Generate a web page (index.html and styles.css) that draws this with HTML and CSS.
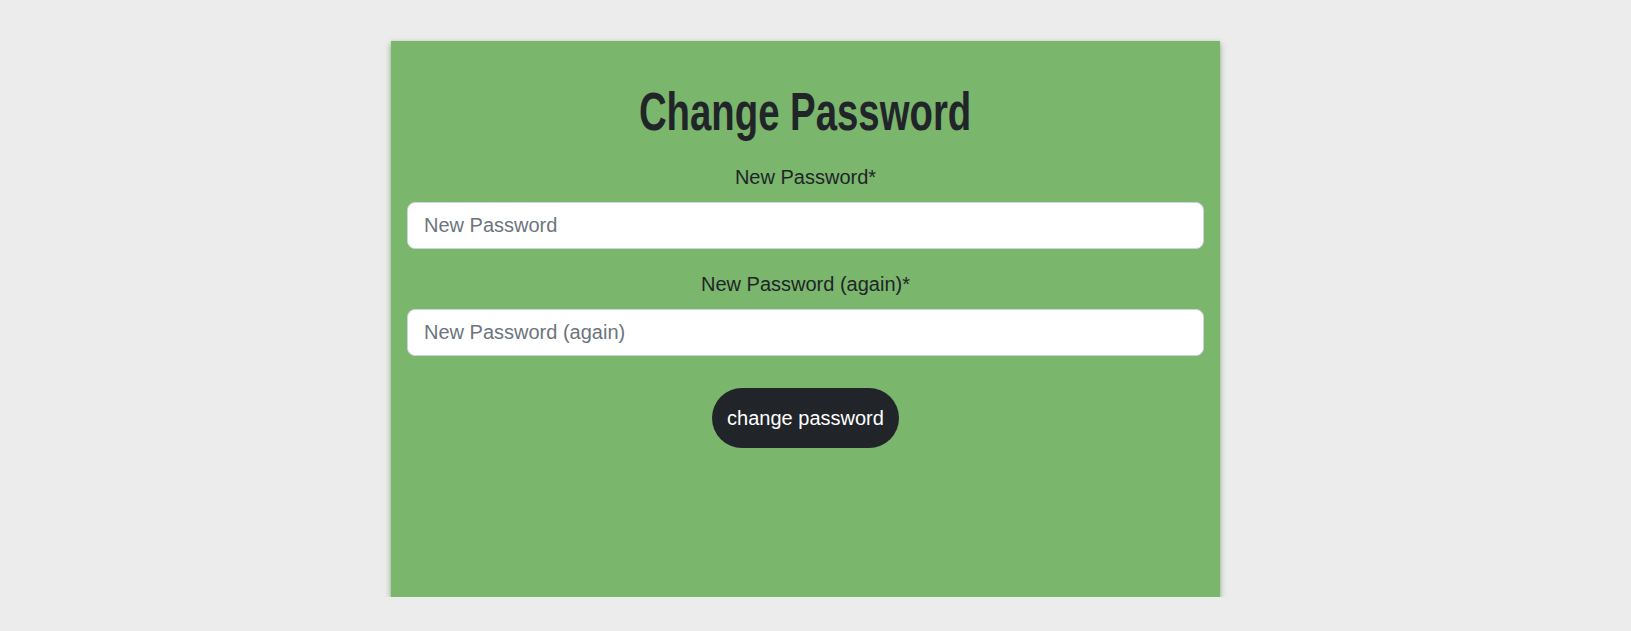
FILE: index.html
```html
<!DOCTYPE html>
<html lang="en">
<head>
<meta charset="utf-8">
<title>Change Password</title>
<link rel="stylesheet" href="styles.css">
</head>
<body>
<main class="page">
  <section class="card">
    <h1 class="title"><span class="title-text">Change Password</span></h1>
    <form class="form">
      <label class="label" for="p1">New Password*</label>
      <input class="input" id="p1" type="password" placeholder="New Password">
      <label class="label second" for="p2">New Password (again)*</label>
      <input class="input" id="p2" type="password" placeholder="New Password (again)">
      <div class="actions">
        <button class="btn" type="button">change password</button>
      </div>
    </form>
  </section>
</main>
</body>
</html>
```

FILE: styles.css
```css
* { box-sizing: border-box; }
html, body { margin: 0; padding: 0; }
body {
  background: #ececec;
  font-family: "Liberation Sans", Arial, sans-serif;
  color: #212529;
}
.page {
  display: flex;
  justify-content: center;
  padding: 41px 20px 0 0;
}
.card {
  width: 829px;
  height: 556px;
  background: #7ab66c;
  box-shadow: 0 3px 6px rgba(70, 130, 60, 0.6), 0 0 3px rgba(0, 0, 0, 0.06);
  padding: 38px 16px 16px;
}
.title {
  margin: 0 0 18px;
  text-align: center;
  font-size: 54px;
  line-height: 64.8px;
  font-weight: 700;
  color: #212529;
}
.title-text {
  display: inline-block;
  transform: scaleX(0.71);
  white-space: nowrap;
}
.form { display: flex; flex-direction: column; }
.label {
  display: block;
  text-align: center;
  font-size: 20px;
  line-height: 30px;
  margin-bottom: 10px;
}
.label.second { margin-top: 20px; }
.input {
  width: 100%;
  height: 47px;
  padding: 0 16px;
  font-family: "Liberation Sans", Arial, sans-serif;
  font-size: 20px;
  color: #212529;
  background: #fff;
  border: 1px solid #ced4da;
  border-radius: 8px;
  outline: none;
}
.input::placeholder { color: #6c757d; opacity: 1; }
.actions {
  display: flex;
  justify-content: center;
  margin-top: 32px;
}
.btn {
  height: 60px;
  padding: 0 15px;
  border: none;
  border-radius: 30px;
  background: #212529;
  color: #fff;
  font-family: "Liberation Sans", Arial, sans-serif;
  font-size: 20px;
  line-height: 30px;
}
```
